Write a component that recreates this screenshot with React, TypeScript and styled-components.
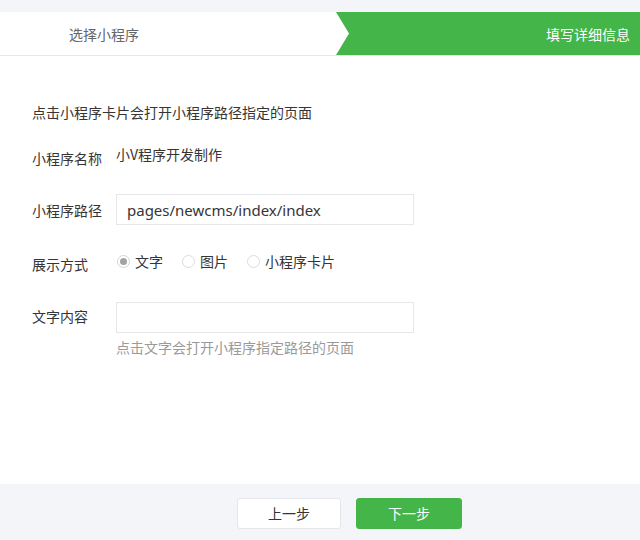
import React, { FC, useState } from "react";
import styled, { createGlobalStyle } from "styled-components";

const green = "#44b549";
const pageBg = "#f4f5f9";
const line = "#e7e7eb";

const GlobalStyle = createGlobalStyle`
  body {
    margin: 0;
    background: ${pageBg};
    font-family: "Noto Sans CJK SC", "Noto Sans", sans-serif;
    color: #353535;
  }
`;

const Page = styled.div`
  width: 640px;
  height: 540px;
  display: flex;
  flex-direction: column;
  padding-top: 12px;
  box-sizing: border-box;
  overflow: hidden;
`;

const StepBar = styled.div`
  display: flex;
  height: 43px;
  background: #fff;
  border-bottom: 1px solid ${line};
  font-size: 14px;
`;

const Step = styled.div<{ active?: boolean }>`
  display: flex;
  align-items: center;
  box-sizing: border-box;
  ${(p) =>
    p.active
      ? `
    flex: 1;
    justify-content: flex-end;
    padding-right: 10px;
    background: ${green};
    color: #fff;
    clip-path: polygon(0 0, 100% 0, 100% 100%, 0 100%, 13px 50%);
  `
      : `
    width: 336px;
    padding-left: 69px;
    color: #666;
  `}
`;

const Content = styled.div`
  flex: 1;
  background: #fff;
  padding: 46px 0 0 32px;
  font-size: 14px;
`;

const Intro = styled.div`
  line-height: 20px;
  color: #353535;
`;

const Row = styled.div<{ top: number }>`
  display: grid;
  grid-template-columns: 84px 298px;
  align-items: center;
  margin-top: ${(p) => p.top}px;
  line-height: 20px;
`;

const Label = styled.div<{ shift?: number }>`
  color: #353535;
  transform: translateY(${(p) => p.shift || 0}px);
`;

const Value = styled.div`
  color: #353535;
  transform: translateY(-4px);
`;

const Input = styled.input`
  height: 31px;
  box-sizing: border-box;
  border: 1px solid ${line};
  border-radius: 0;
  padding: 0 10px;
  font-family: "Noto Sans", "Noto Sans CJK SC", sans-serif;
  font-size: 15px;
  color: #353535;
  outline: none;
`;

const Radios = styled.div`
  display: flex;
  align-items: center;
  gap: 19px;
  padding-left: 1px;
  transform: translateY(-4px);
`;

const RadioItem = styled.label`
  display: flex;
  align-items: center;
  gap: 5px;
  cursor: pointer;
  color: #353535;
`;

const Circle = styled.span<{ checked?: boolean }>`
  width: 13px;
  height: 13px;
  box-sizing: border-box;
  border-radius: 50%;
  border: 1px solid ${(p) => (p.checked ? "#d5d5d5" : "#dcdcdc")};
  display: flex;
  align-items: center;
  justify-content: center;
  &::after {
    content: "";
    width: 7px;
    height: 7px;
    border-radius: 50%;
    background: ${(p) => (p.checked ? "#a3a3a3" : "transparent")};
  }
`;

const Hint = styled.div`
  margin: 4px 0 0 84px;
  line-height: 20px;
  color: #9a9a9a;
`;

const Footer = styled.div`
  height: 56px;
  flex-shrink: 0;
  background: ${pageBg};
  display: flex;
  align-items: center;
  padding-left: 237px;
  gap: 15px;
`;

const Button = styled.button<{ primary?: boolean }>`
  width: ${(p) => (p.primary ? 106 : 104)}px;
  height: 31px;
  border-radius: 3px;
  border: 1px solid ${(p) => (p.primary ? green : "#e4e6ec")};
  background: ${(p) => (p.primary ? green : "#fff")};
  color: ${(p) => (p.primary ? "#fff" : "#353535")};
  font-family: "Noto Sans CJK SC", sans-serif;
  font-size: 14px;
  cursor: pointer;
  margin-top: 2px;
`;

const options = ["文字", "图片", "小程序卡片"];

const App: FC = () => {
  const [mode, setMode] = useState(0);
  return (
    <Page>
      <GlobalStyle />
      <StepBar>
        <Step>选择小程序</Step>
        <Step active>填写详细信息</Step>
      </StepBar>
      <Content>
        <Intro>点击小程序卡片会打开小程序路径指定的页面</Intro>
        <Row top={26}>
          <Label>小程序名称</Label>
          <Value>小V程序开发制作</Value>
        </Row>
        <Row top={26}>
          <Label>小程序路径</Label>
          <Input defaultValue="pages/newcms/index/index" />
        </Row>
        <Row top={30}>
          <Label shift={-1}>展示方式</Label>
          <Radios>
            {options.map((o, idx) => (
              <RadioItem key={idx} onClick={() => setMode(idx)}>
                <Circle checked={mode === idx} />
                {o}
              </RadioItem>
            ))}
          </Radios>
        </Row>
        <Row top={27}>
          <Label shift={-2}>文字内容</Label>
          <Input />
        </Row>
        <Hint>点击文字会打开小程序指定路径的页面</Hint>
      </Content>
      <Footer>
        <Button>上一步</Button>
        <Button primary>下一步</Button>
      </Footer>
    </Page>
  );
};

export default App;
